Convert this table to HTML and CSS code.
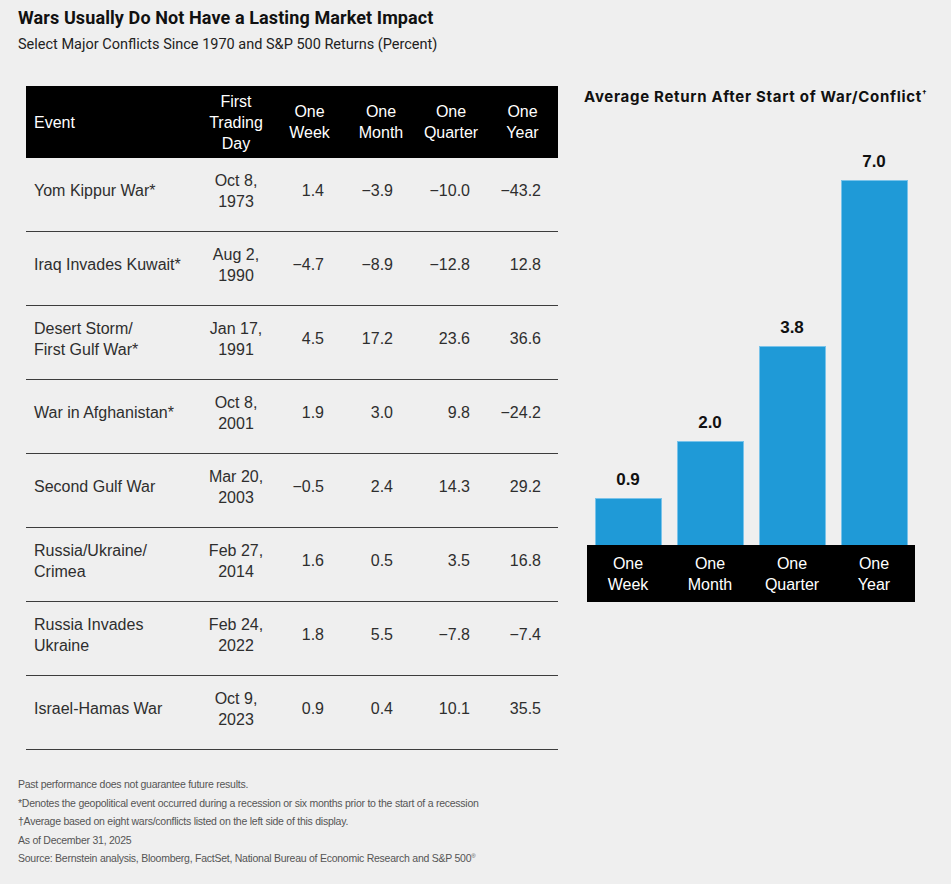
FILE: index.html
```html
<!DOCTYPE html>
<html lang="en">
<head>
<meta charset="utf-8">
<title>Wars Usually Do Not Have a Lasting Market Impact</title>
<link rel="stylesheet" href="styles.css">
</head>
<body>
<div class="page">
  <header class="head">
    <h1 class="title">Wars Usually Do Not Have a Lasting Market Impact</h1>
    <p class="subtitle">Select Major Conflicts Since 1970 and S&amp;P 500 Returns (Percent)</p>
  </header>
  <main class="main">
    <table class="wars">
      <colgroup>
        <col class="c-event"><col class="c-date"><col class="c-week"><col class="c-month"><col class="c-quarter"><col class="c-year">
      </colgroup>
      <thead>
        <tr>
          <th class="ev">Event</th>
          <th>First<br>Trading<br>Day</th>
          <th>One<br>Week</th>
          <th>One<br>Month</th>
          <th>One<br>Quarter</th>
          <th>One<br>Year</th>
        </tr>
      </thead>
      <tbody>
        <tr><td class="ev">Yom Kippur War*</td><td class="dt">Oct 8,<br>1973</td><td class="n wk">1.4</td><td class="n mo">&minus;3.9</td><td class="n qt">&minus;10.0</td><td class="n yr">&minus;43.2</td></tr>
        <tr><td class="ev">Iraq Invades Kuwait*</td><td class="dt">Aug 2,<br>1990</td><td class="n wk">&minus;4.7</td><td class="n mo">&minus;8.9</td><td class="n qt">&minus;12.8</td><td class="n yr">12.8</td></tr>
        <tr><td class="ev">Desert Storm/<br>First Gulf War*</td><td class="dt">Jan 17,<br>1991</td><td class="n wk">4.5</td><td class="n mo">17.2</td><td class="n qt">23.6</td><td class="n yr">36.6</td></tr>
        <tr><td class="ev">War in Afghanistan*</td><td class="dt">Oct 8,<br>2001</td><td class="n wk">1.9</td><td class="n mo">3.0</td><td class="n qt">9.8</td><td class="n yr">&minus;24.2</td></tr>
        <tr><td class="ev">Second Gulf War</td><td class="dt">Mar 20,<br>2003</td><td class="n wk">&minus;0.5</td><td class="n mo">2.4</td><td class="n qt">14.3</td><td class="n yr">29.2</td></tr>
        <tr><td class="ev">Russia/Ukraine/<br>Crimea</td><td class="dt">Feb 27,<br>2014</td><td class="n wk">1.6</td><td class="n mo">0.5</td><td class="n qt">3.5</td><td class="n yr">16.8</td></tr>
        <tr><td class="ev">Russia Invades<br>Ukraine</td><td class="dt">Feb 24,<br>2022</td><td class="n wk">1.8</td><td class="n mo">5.5</td><td class="n qt">&minus;7.8</td><td class="n yr">&minus;7.4</td></tr>
        <tr><td class="ev">Israel-Hamas War</td><td class="dt">Oct 9,<br>2023</td><td class="n wk">0.9</td><td class="n mo">0.4</td><td class="n qt">10.1</td><td class="n yr">35.5</td></tr>
      </tbody>
    </table>

    <section class="chart">
      <h2 class="chart-title">Average Return After Start of War/Conflict<sup>&dagger;</sup></h2>
      <div class="bars">
        <div class="bar-col"><span class="val">0.9</span><div class="bar" style="height:47px"></div></div>
        <div class="bar-col"><span class="val">2.0</span><div class="bar" style="height:104px"></div></div>
        <div class="bar-col"><span class="val">3.8</span><div class="bar" style="height:199px"></div></div>
        <div class="bar-col"><span class="val">7.0</span><div class="bar" style="height:365px"></div></div>
      </div>
      <div class="axis">
        <span>One<br>Week</span>
        <span>One<br>Month</span>
        <span>One<br>Quarter</span>
        <span>One<br>Year</span>
      </div>
    </section>
  </main>
  <footer class="notes">
    <p>Past performance does not guarantee future results.</p>
    <p>*Denotes the geopolitical event occurred during a recession or six months prior to the start of a recession</p>
    <p>&dagger;Average based on eight wars/conflicts listed on the left side of this display.</p>
    <p>As of December 31, 2025</p>
    <p>Source: Bernstein analysis, Bloomberg, FactSet, National Bureau of Economic Research and S&amp;P 500<sup>&reg;</sup></p>
  </footer>
</div>
</body>
</html>
```
FILE: styles.css
```css
html, body {
  margin: 0;
  padding: 0;
  background: #efefef;
}
body {
  font-family: "Liberation Sans", Arial, sans-serif;
  color: #222;
}
.page {
  width: 951px;
  height: 884px;
  padding: 8px 0 0 18px;
  box-sizing: border-box;
}
.head {
  margin: 0;
}
.title {
  font-family: Roboto, "Liberation Sans", sans-serif;
  font-weight: 700;
  font-size: 18px;
  line-height: 20px;
  letter-spacing: 0.1px;
  margin: 0;
  color: #111;
}
.subtitle {
  font-family: Roboto, "Liberation Sans", sans-serif;
  font-size: 14.5px;
  line-height: 18px;
  margin: 8px 0 0 0;
  color: #222;
}
.main {
  display: flex;
  align-items: flex-start;
  margin-top: 32px;
}
.wars {
  margin-left: 8px;
  width: 532px;
  table-layout: fixed;
  border-collapse: collapse;
  font-size: 16px;
}
.c-event { width: 174px; }
.c-date { width: 72px; }
.c-week { width: 75px; }
.c-month { width: 68px; }
.c-quarter { width: 72px; }
.c-year { width: 71px; }
.wars thead th {
  background: #000;
  color: #fff;
  font-weight: 400;
  line-height: 21px;
  height: 72px;
  padding: 0;
  text-align: center;
  vertical-align: middle;
}
.wars thead th.ev {
  text-align: left;
  padding-left: 8px;
}
.wars tbody td {
  height: 65px;
  padding: 0 0 8px 0;
  border-bottom: 1.5px solid #3c3c3c;
  line-height: 21px;
  vertical-align: middle;
  color: #2e2e2e;
  white-space: nowrap;
}
.wars td.ev {
  padding-left: 8px;
}
.wars td.dt {
  text-align: center;
}
.wars td.n {
  text-align: right;
}
.wars td.wk { padding-right: 23px; }
.wars td.mo { padding-right: 22px; }
.wars td.qt { padding-right: 17px; }
.wars td.yr { padding-right: 17px; }

.chart {
  margin-left: 29px;
  width: 328px;
}
.chart-title {
  margin: 0 0 0 -3px;
  font-family: Inter, "Liberation Sans", sans-serif;
  font-size: 15px;
  font-weight: 700;
  line-height: 22px;
  letter-spacing: 0.7px;
  color: #111;
  white-space: nowrap;
}
.chart-title sup {
  font-size: 8px;
  vertical-align: 6px;
  line-height: 0;
}
.bars {
  height: 437px;
  display: grid;
  grid-template-columns: repeat(4, 1fr);
  align-items: end;
}
.bar-col {
  display: flex;
  flex-direction: column;
  align-items: center;
}
.val {
  font-size: 17px;
  font-weight: 700;
  line-height: 18px;
  margin-bottom: 9px;
  color: #111;
}
.bar {
  width: 67px;
  box-sizing: border-box;
  background: #1f9ad7;
  border: 1px solid #79c3ea;
  border-bottom: none;
}
.axis {
  background: #000;
  color: #fff;
  height: 57px;
  display: grid;
  grid-template-columns: repeat(4, 1fr);
  align-items: center;
  text-align: center;
  font-size: 16px;
  line-height: 21px;
}
.notes {
  margin-top: 25px;
  font-size: 10.5px;
  line-height: 18.5px;
  color: #555;
  letter-spacing: -0.25px;
}
.notes p {
  margin: 0;
}
.notes sup {
  font-size: 6px;
  vertical-align: 4px;
  line-height: 0;
}
```
